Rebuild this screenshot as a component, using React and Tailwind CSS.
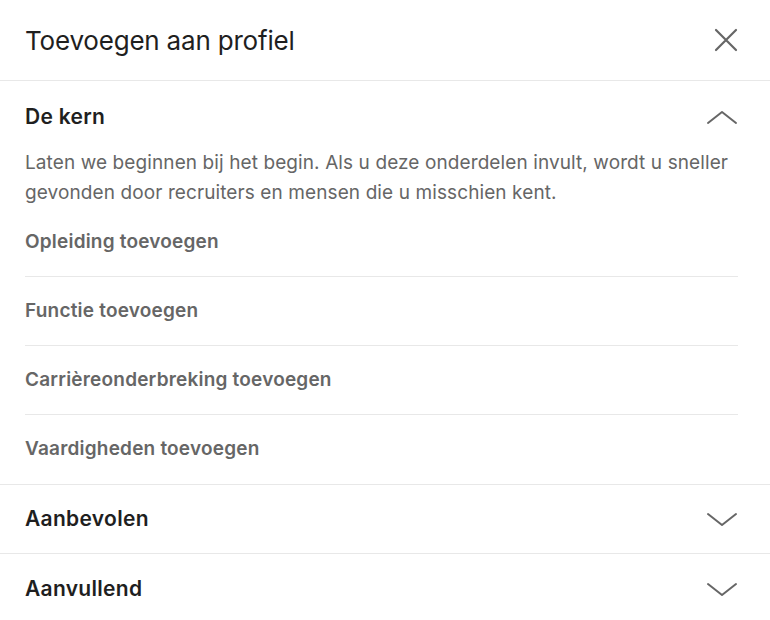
const Chevron = ({ up }) => (
  <svg width="32" height="16" viewBox="0 0 32 16" fill="none" stroke="#666666" strokeWidth="2" strokeLinecap="round" strokeLinejoin="round">
    {up ? <path d="M2 14 L16 3 L30 14" /> : <path d="M2 3 L16 14 L30 3" />}
  </svg>
);

const items = [
  'Opleiding toevoegen',
  'Functie toevoegen',
  'Carrièreonderbreking toevoegen',
  'Vaardigheden toevoegen',
];

export default function App() {
  return (
    <div className="w-[770px] h-[620px] bg-white overflow-hidden" style={{ fontFamily: 'Inter, "Liberation Sans", Arial, sans-serif' }}>
      {/* Header */}
      <div className="h-[81px] flex items-center justify-between pl-[25px] pr-[32px] border-b border-[#e8e8e8]">
        <h1 className="text-[26px] text-[#1f1f1f] tracking-[-0.2px]">Toevoegen aan profiel</h1>
        <svg width="24" height="24" viewBox="0 0 24 24" fill="none" stroke="#666666" strokeWidth="2.2" strokeLinecap="round">
          <path d="M2 2 L22 22 M22 2 L2 22" />
        </svg>
      </div>

      {/* De kern */}
      <div className="border-b border-[#e8e8e8]">
        <div className="h-[67px] flex items-center justify-between pl-[25px] pr-[32px] pt-[5px]">
          <h2 className="text-[21px] font-semibold text-[#1f1f1f] tracking-[0.3px]">De kern</h2>
          <Chevron up />
        </div>
        <p className="pl-[25px] pr-[30px] text-[19px] leading-[30px] text-[#666666] tracking-[0.1px]">
          Laten we beginnen bij het begin. Als u deze onderdelen invult, wordt u sneller gevonden door recruiters en mensen die u misschien kent.
        </p>
        <div className="ml-[25px] mr-[32px]">
          {items.map((item, i) => (
            <div
              key={item}
              className={`h-[69px] flex items-center text-[19px] font-semibold text-[#666666] tracking-[0.2px] ${i < items.length - 1 ? 'border-b border-[#e8e8e8]' : ''}`}
            >
              {item}
            </div>
          ))}
        </div>
      </div>

      {/* Aanbevolen */}
      <div className="h-[69px] flex items-center justify-between pl-[25px] pr-[32px] border-b border-[#e8e8e8]">
        <h2 className="text-[21px] font-semibold text-[#1f1f1f] tracking-[0.3px]">Aanbevolen</h2>
        <Chevron />
      </div>

      {/* Aanvullend */}
      <div className="h-[69px] flex items-center justify-between pl-[25px] pr-[32px]">
        <h2 className="text-[21px] font-semibold text-[#1f1f1f] tracking-[0.3px]">Aanvullend</h2>
        <Chevron />
      </div>
    </div>
  );
}
